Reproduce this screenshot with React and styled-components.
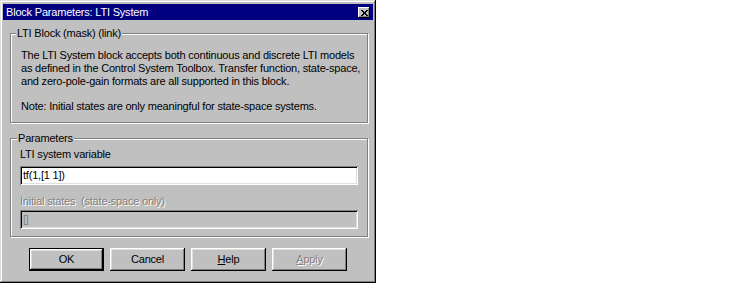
import React from "react";
import styled, { createGlobalStyle } from "styled-components";

const GlobalStyle = createGlobalStyle`
  html, body {
    margin: 0;
    padding: 0;
    background: #fff;
  }
  body {
    font-family: "Liberation Sans", Arial, sans-serif;
    font-size: 11px;
    letter-spacing: -0.2px;
    color: #000;
  }
`;

const Window = styled.div`
  width: 376px;
  height: 283px;
  box-sizing: border-box;
  padding: 4px 3px 3px;
  background: #c0c0c0;
  box-shadow: inset -1px -1px #000, inset 1px 1px #dfdfdf,
    inset -2px -2px #808080, inset 2px 2px #fff;
  display: flex;
  flex-direction: column;
`;

const TitleBar = styled.div`
  height: 16px;
  background: #000080;
  color: #fff;
  display: flex;
  align-items: center;
  justify-content: space-between;
  padding-left: 3px;
  padding-right: 3px;
`;

const CloseButton = styled.div`
  width: 12px;
  height: 11px;
  box-sizing: border-box;
  background: #c0c0c0;
  box-shadow: inset -1px -1px #000, inset 1px 1px #fff,
    inset -2px -2px #808080;
  display: flex;
  align-items: center;
  justify-content: center;
  padding-top: 1px;
`;

const Body = styled.div`
  flex: 1;
  display: flex;
  flex-direction: column;
  padding: 7px 5px 0 7px;
`;

const GroupBox = styled.fieldset`
  margin: ${(p) => (p.$spaced ? "9px 0 0" : "0")};
  padding: ${(p) => p.$pad};
  min-width: 0;
  border: 1px solid #808080;
  box-shadow: inset 1px 1px #fff, 1px 1px #fff;
`;

const Legend = styled.legend`
  padding: 0 1px;
  margin-left: ${(p) => p.$shift}px;
  background: #c0c0c0;
  line-height: 13px;
`;

const Text = styled.p`
  margin: ${(p) => (p.$gap ? "12.75px 0 0" : "0")};
  line-height: 12.75px;
  white-space: nowrap;
`;

const FieldLabel = styled.div`
  line-height: 13px;
  margin-top: ${(p) => p.$top || 0}px;
  white-space: pre;
  color: ${(p) => (p.$disabled ? "#808080" : "#000")};
  text-shadow: ${(p) => (p.$disabled ? "1px 1px #fff" : "none")};
`;

const Edit = styled.div`
  height: 19px;
  box-sizing: border-box;
  margin-top: ${(p) => p.$top}px;
  padding-left: 3px;
  display: flex;
  align-items: center;
  background: ${(p) => (p.$disabled ? "#c0c0c0" : "#fff")};
  color: ${(p) => (p.$disabled ? "#808080" : "#000")};
  box-shadow: inset 1px 1px #808080, inset -1px -1px #fff,
    inset 2px 2px #000, inset -2px -2px #dfdfdf;
`;

const ButtonRow = styled.div`
  display: flex;
  justify-content: center;
  gap: 6px;
  margin-top: 11px;
  padding-right: 2px;
`;

const Button = styled.div`
  width: 75px;
  height: 23px;
  box-sizing: border-box;
  display: flex;
  align-items: center;
  justify-content: center;
  background: #c0c0c0;
  border: ${(p) => (p.$default ? "1px solid #000" : "none")};
  box-shadow: inset -1px -1px #000, inset 1px 1px #fff,
    inset -2px -2px #808080, inset 2px 2px #dfdfdf;
  color: ${(p) => (p.$disabled ? "#808080" : "#000")};
  text-shadow: ${(p) => (p.$disabled ? "1px 1px #fff" : "none")};
`;

function CloseGlyph() {
  return (
    <svg width="7" height="6" viewBox="0 0 7 6" shapeRendering="crispEdges">
      <path
        fill="#000"
        d="M0 0h2v1H0z M5 0h2v1H5z M1 1h2v1H1z M4 1h2v1H4z M2 2h3v1H2z M2 3h3v1H2z M1 4h2v1H1z M4 4h2v1H4z M0 5h2v1H0z M5 5h2v1H5z"
      />
    </svg>
  );
}

export default function App() {
  return (
    <>
      <GlobalStyle />
      <Window>
        <TitleBar>
          <span>Block Parameters: LTI System</span>
          <CloseButton>
            <CloseGlyph />
          </CloseButton>
        </TitleBar>
        <Body>
          <GroupBox $pad="9px 10px 9px 10px">
            <Legend $shift={-5}>LTI Block (mask) (link)</Legend>
            <Text>
              The LTI System block accepts both continuous and discrete LTI models
              <br />
              as defined in the Control System Toolbox. Transfer function, state-space,
              <br />
              and zero-pole-gain formats are all supported in this block.
            </Text>
            <Text $gap>Note: Initial states are only meaningful for state-space systems.</Text>
          </GroupBox>
          <GroupBox $spaced $pad="3px 9px 7px 9px">
            <Legend $shift={-3}>Parameters</Legend>
            <FieldLabel>LTI system variable</FieldLabel>
            <Edit $top={5}>tf(1,[1 1])</Edit>
            <FieldLabel $top={10} $disabled>
              {"Initial states  (state-space only)"}
            </FieldLabel>
            <Edit $top={2} $disabled>
              []
            </Edit>
          </GroupBox>
          <ButtonRow>
            <Button $default>OK</Button>
            <Button>Cancel</Button>
            <Button>
              <span>
                <u>H</u>elp
              </span>
            </Button>
            <Button $disabled>
              <span>
                <u>A</u>pply
              </span>
            </Button>
          </ButtonRow>
        </Body>
      </Window>
    </>
  );
}
